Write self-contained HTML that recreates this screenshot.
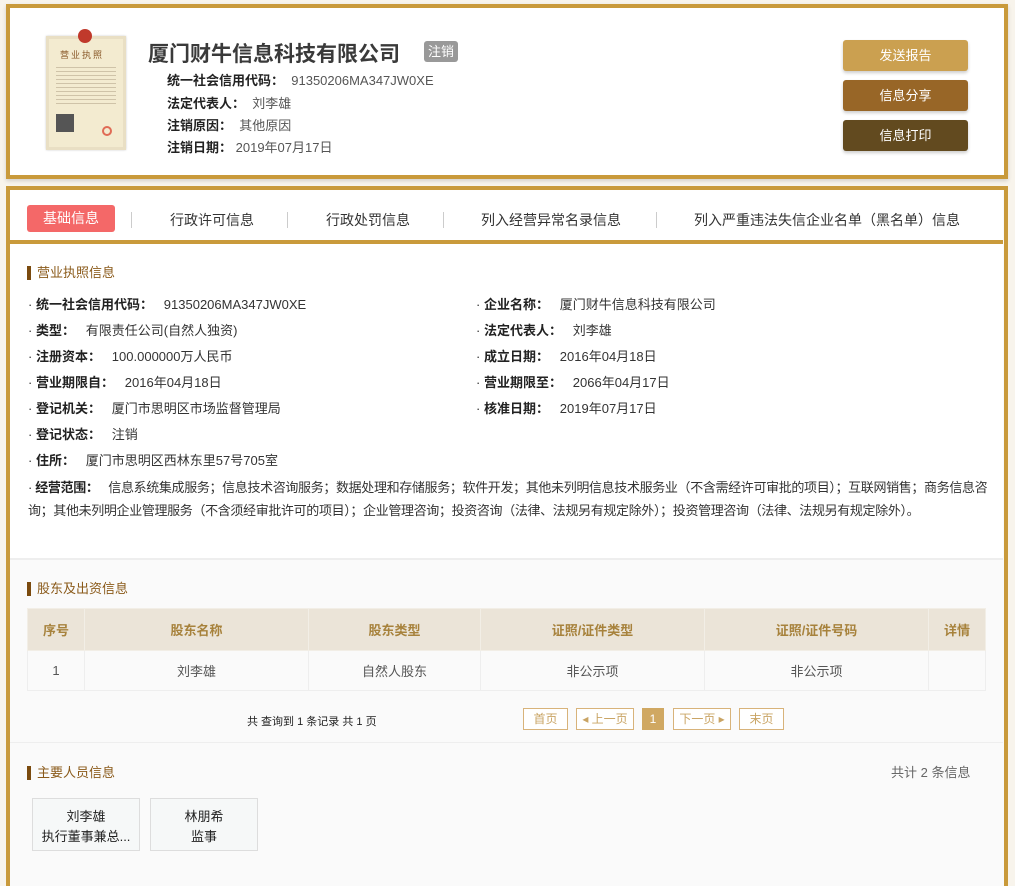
<!DOCTYPE html>
<html><head><meta charset="utf-8"><style>
*{margin:0;padding:0;box-sizing:border-box}
body{width:1015px;height:858px;overflow:hidden;background:#f8f4ec;font-family:"Liberation Sans","Noto Sans CJK SC",sans-serif;font-size:13px;color:#333;position:relative}
.a{position:absolute;white-space:nowrap}
.card1{position:absolute;left:6px;top:4px;width:1002px;height:175px;border:4px solid #c99a3b;background:#fff;box-shadow:0 2px 4px rgba(0,0,0,.15)}
.card2{position:absolute;left:6px;top:186px;width:1002px;height:700px;border:4px solid #c99a3b;border-bottom:none;background:#fafafa}
.btn{position:absolute;left:843px;width:125px;height:31px;border-radius:3px;color:#fff;font-size:13px;text-align:center;line-height:31px;box-shadow:0 2px 3px rgba(0,0,0,.2)}
.b{font-weight:bold;color:#222}
.v{color:#555}
.sec{position:absolute;left:27px;font-size:13px;color:#8a5a1a;border-left:4px solid #7a4a0e;padding-left:6px;line-height:14px}
.row{position:absolute;left:28px;font-size:13px;line-height:16px}
.sep{position:absolute;top:212px;width:1px;height:16px;background:#ccc}
table{position:absolute;left:27px;top:608px;width:959px;border-collapse:collapse;font-size:13px}
th{background:#ebe4d8;color:#a7823c;height:42px;font-weight:bold;border:1px solid #f2eee6}
td{background:#fafafa;color:#555;height:40px;text-align:center;border:1px solid #eee}
.pg{position:absolute;top:708px;height:22px;border:1px solid #d8b37a;color:#c9a464;font-size:12px;line-height:20px;text-align:center;background:#fff}
.pp{position:absolute;top:798px;width:108px;height:53px;border:1px solid #ddd;background:#f6f8f8;text-align:center;font-size:13px;line-height:20px;padding-top:8px;color:#222}
</style></head><body>
<div class="card1"></div>
<div class="a" style="left:46px;top:36px;width:80px;height:114px;background:#f3ebd0;border:3px solid #e9dfc4;box-shadow:0 0 2px #ccc"></div>
<div class="a" style="left:78px;top:29px;width:14px;height:14px;border-radius:50%;background:#c0392b"></div>
<div class="a" style="left:60px;top:48px;font-size:9px;color:#8a5a2a;letter-spacing:2px">营业执照</div>
<div class="a" style="left:56px;top:64px;width:60px;height:42px;background:repeating-linear-gradient(#f3ebd0 0 3px,#cfc3a8 3px 4px)"></div>
<div class="a" style="left:56px;top:114px;width:18px;height:18px;background:#555"></div>
<div class="a" style="left:102px;top:126px;width:10px;height:10px;border-radius:50%;border:2px solid #e06b55"></div>

<div class="a" style="left:148px;top:38px;font-size:21px;font-weight:bold;color:#3a3a3a">厦门财牛信息科技有限公司</div>
<div class="a" style="left:424px;top:41px;width:34px;height:21px;background:#999;color:#fff;border-radius:3px;text-align:center;line-height:21px;font-size:13px">注销</div>
<div class="a" style="left:167px;top:70px"><span class="b">统一社会信用代码：</span> <span class="v">&nbsp;91350206MA347JW0XE</span></div>
<div class="a" style="left:167px;top:93px"><span class="b">法定代表人：</span> <span class="v">&nbsp;刘李雄</span></div>
<div class="a" style="left:167px;top:115px"><span class="b">注销原因：</span> <span class="v">&nbsp;其他原因</span></div>
<div class="a" style="left:167px;top:137px"><span class="b">注销日期：</span> <span class="v">2019年07月17日</span></div>
<div class="btn" style="top:40px;background:#cba050">发送报告</div>
<div class="btn" style="top:80px;background:#986627">信息分享</div>
<div class="btn" style="top:120px;background:#624a1f">信息打印</div>

<div class="card2"></div>
<div class="a" style="left:10px;top:190px;width:993px;height:50px;background:#fff"></div>
<div class="a" style="left:10px;top:240px;width:993px;height:4px;background:#c99a3b"></div>
<div class="a" style="left:27px;top:205px;width:88px;height:27px;background:#f46868;border-radius:3px;color:#fff;text-align:center;line-height:27px;font-size:14px">基础信息</div>
<div class="sep" style="left:131px"></div><div class="sep" style="left:287px"></div><div class="sep" style="left:443px"></div><div class="sep" style="left:656px"></div>
<div class="a" style="left:170px;top:210px;font-size:14px">行政许可信息</div>
<div class="a" style="left:326px;top:210px;font-size:14px">行政处罚信息</div>
<div class="a" style="left:481px;top:210px;font-size:14px">列入经营异常名录信息</div>
<div class="a" style="left:694px;top:210px;font-size:14px">列入严重违法失信企业名单（黑名单）信息</div>

<div class="a" style="left:10px;top:244px;width:993px;height:314px;background:#fff"></div>
<div class="a" style="left:10px;top:558px;width:993px;height:2px;background:#eee"></div>
<div class="a" style="left:10px;top:742px;width:993px;height:1px;background:#eee"></div>
<div class="sec" style="top:266px">营业执照信息</div>
<div class="row" style="top:297px">· <span class="b">统一社会信用代码：</span> &nbsp;&nbsp;91350206MA347JW0XE</div>
<div class="row" style="top:323px">· <span class="b">类型：</span> &nbsp;&nbsp;有限责任公司(自然人独资)</div>
<div class="row" style="top:349px">· <span class="b">注册资本：</span> &nbsp;&nbsp;100.000000万人民币</div>
<div class="row" style="top:375px">· <span class="b">营业期限自：</span> &nbsp;&nbsp;2016年04月18日</div>
<div class="row" style="top:401px">· <span class="b">登记机关：</span> &nbsp;&nbsp;厦门市思明区市场监督管理局</div>
<div class="row" style="top:427px">· <span class="b">登记状态：</span> &nbsp;&nbsp;注销</div>
<div class="row" style="top:453px">· <span class="b">住所：</span> &nbsp;&nbsp;厦门市思明区西林东里57号705室</div>
<div class="row" style="white-space:normal;width:975px;line-height:23px;top:476px;letter-spacing:-0.35px">· <span class="b">经营范围：</span> &nbsp;&nbsp;信息系统集成服务；信息技术咨询服务；数据处理和存储服务；软件开发；其他未列明信息技术服务业（不含需经许可审批的项目）；互联网销售；商务信息咨询；其他未列明企业管理服务（不含须经审批许可的项目）；企业管理咨询；投资咨询（法律、法规另有规定除外）；投资管理咨询（法律、法规另有规定除外）。</div>
<div class="row" style="left:476px;top:297px">· <span class="b">企业名称：</span> &nbsp;&nbsp;厦门财牛信息科技有限公司</div>
<div class="row" style="left:476px;top:323px">· <span class="b">法定代表人：</span> &nbsp;&nbsp;刘李雄</div>
<div class="row" style="left:476px;top:349px">· <span class="b">成立日期：</span> &nbsp;&nbsp;2016年04月18日</div>
<div class="row" style="left:476px;top:375px">· <span class="b">营业期限至：</span> &nbsp;&nbsp;2066年04月17日</div>
<div class="row" style="left:476px;top:401px">· <span class="b">核准日期：</span> &nbsp;&nbsp;2019年07月17日</div>

<div class="sec" style="top:582px">股东及出资信息</div>
<table><tr><th style="width:57px">序号</th><th style="width:224px">股东名称</th><th style="width:172px">股东类型</th><th style="width:224px">证照/证件类型</th><th style="width:224px">证照/证件号码</th><th>详情</th></tr>
<tr><td>1</td><td>刘李雄</td><td>自然人股东</td><td>非公示项</td><td>非公示项</td><td></td></tr></table>
<div class="a" style="left:247px;top:713px;font-size:11px;color:#222">共 查询到 1 条记录 共 1 页</div>
<div class="pg" style="left:523px;width:45px">首页</div>
<div class="pg" style="left:576px;width:58px">◂ 上一页</div>
<div class="pg" style="left:642px;width:22px;background:#d0a862;color:#fff;border-color:#d0a862">1</div>
<div class="pg" style="left:673px;width:58px">下一页 ▸</div>
<div class="pg" style="left:739px;width:45px">末页</div>

<div class="sec" style="top:766px">主要人员信息</div>
<div class="a" style="left:891px;top:762px;color:#666">共计 2 条信息</div>
<div class="pp" style="left:32px">刘李雄<br>执行董事兼总...</div>
<div class="pp" style="left:150px">林朋希<br>监事</div>
</body></html>
